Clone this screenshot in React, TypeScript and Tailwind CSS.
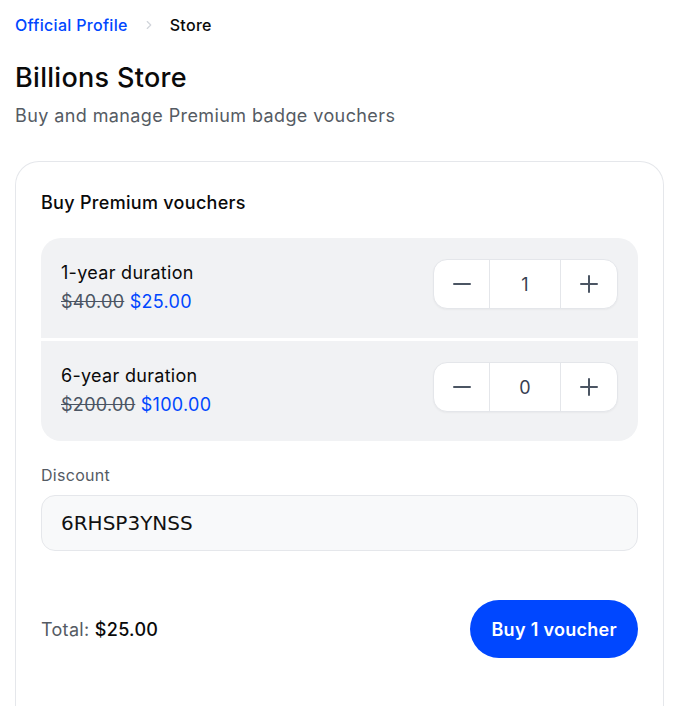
import React, { useState } from 'react';

interface VoucherOption {
  id: string;
  label: string;
  oldPrice: string;
  price: string;
}

const options: VoucherOption[] = [
  { id: '1y', label: '1-year duration', oldPrice: '$40.00', price: '$25.00' },
  { id: '6y', label: '6-year duration', oldPrice: '$200.00', price: '$100.00' },
];

const Stepper: React.FC<{ value: number; onChange: (v: number) => void }> = ({ value, onChange }) => (
  <div className="flex h-[50px] w-[185px] overflow-hidden rounded-[14px] border border-[#e4e6ea] bg-white shadow-[0_1px_2px_rgba(0,0,0,0.04)]">
    <button
      onClick={() => onChange(Math.max(0, value - 1))}
      className="flex w-[56px] items-center justify-center border-r border-[#e4e6ea] text-[#4b5563]"
    >
      <svg width="20" height="20" viewBox="0 0 20 20" fill="none" stroke="currentColor" strokeWidth="2" strokeLinecap="round">
        <path d="M2 10h16" />
      </svg>
    </button>
    <div className="flex flex-1 items-center justify-center text-[18px] text-[#374151]">{value}</div>
    <button
      onClick={() => onChange(value + 1)}
      className="flex w-[57px] items-center justify-center border-l border-[#e4e6ea] text-[#4b5563]"
    >
      <svg width="20" height="20" viewBox="0 0 20 20" fill="none" stroke="currentColor" strokeWidth="2" strokeLinecap="round">
        <path d="M2 10h16M10 2v16" />
      </svg>
    </button>
  </div>
);

export default function App() {
  const [counts, setCounts] = useState<Record<string, number>>({ '1y': 1, '6y': 0 });
  const [code, setCode] = useState('6RHSP3YNSS');

  return (
    <div className="min-h-screen bg-white px-[15px] pt-[13px] font-['Inter',sans-serif] tracking-[0.3px] text-[#0a0a0a]">
      {/* Breadcrumb */}
      <nav className="flex items-center gap-[14px] text-[16px]">
        <a className="font-medium text-[#0047ff]">Official Profile</a>
        <svg width="14" height="14" viewBox="0 0 24 24" fill="none" stroke="#d1d5db" strokeWidth="2" strokeLinecap="round" strokeLinejoin="round">
          <path d="M9 6l6 6-6 6" />
        </svg>
        <span className="font-medium">Store</span>
      </nav>

      <h1 className="mt-[23px] text-[27px] font-medium leading-[36px] tracking-[0.3px]">Billions Store</h1>
      <p className="mt-[6px] text-[18px] leading-[28px] tracking-[0.4px] text-[#555b63]">Buy and manage Premium badge vouchers</p>

      {/* Card */}
      <div className="mt-[31px] rounded-t-[24px] border border-b-0 border-[#e5e7eb] px-[25px] pb-[48px] pt-[28px]">
        <h2 className="text-[18px] font-medium leading-[26px]">Buy Premium vouchers</h2>

        <div className="mt-[22px] flex flex-col gap-[3px] overflow-hidden rounded-[20px]">
          {options.map(o => (
            <div key={o.id} className="flex h-[100px] items-start justify-between bg-[#f1f2f4] px-[20px] pt-[21px]">
              <div className="flex flex-col">
                <span className="text-[18px] leading-[28px]">{o.label}</span>
                <span className="text-[18px] leading-[30px]">
                  <span className="text-[#4b5563] line-through">{o.oldPrice}</span>{' '}
                  <span className="text-[#0047ff]">{o.price}</span>
                </span>
              </div>
              <Stepper value={counts[o.id]} onChange={v => setCounts({ ...counts, [o.id]: v })} />
            </div>
          ))}
        </div>

        <label className="mt-[22px] block text-[16px] leading-[24px] text-[#555b63]">Discount</label>
        <input
          value={code}
          onChange={e => setCode(e.target.value)}
          className="mt-[8px] h-[56px] w-full rounded-[14px] border border-[#e5e7eb] bg-[#f8f9fa] px-[19px] font-['DejaVu_Sans',sans-serif] text-[20px] tracking-normal text-[#111] outline-none"
        />

        <div className="mt-[49px] flex items-center justify-between">
          <div className="text-[18px]">
            <span className="text-[#555b63]">Total: </span>
            <span className="font-medium">$25.00</span>
          </div>
          <button className="h-[58px] rounded-full bg-[#0047ff] px-[21px] text-[18px] font-semibold text-white">
            Buy 1 voucher
          </button>
        </div>
      </div>
    </div>
  );
}
